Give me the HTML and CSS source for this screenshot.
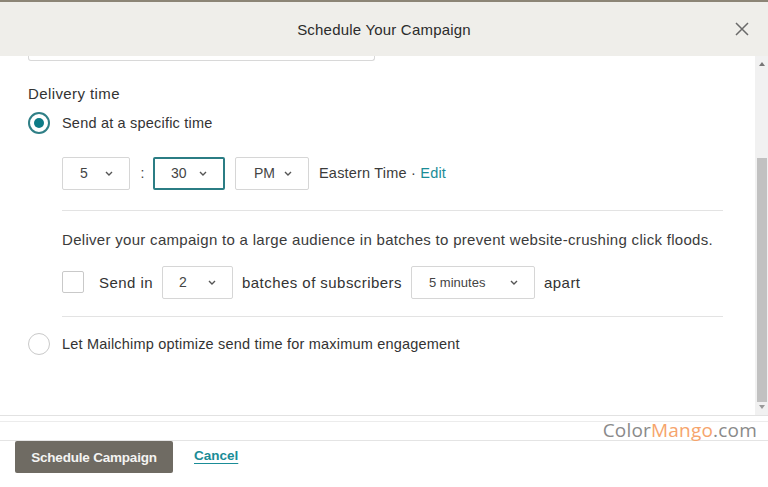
FILE: index.html
```html
<!DOCTYPE html>
<html>
<head>
<meta charset="utf-8">
<link rel="stylesheet" href="styles.css">
</head>
<body>
<div class="topline"></div>
<header class="header">
  <span></span>
  <h1 class="title">Schedule Your Campaign</h1>
  <button class="close" aria-label="Close">
    <svg width="16" height="16" viewBox="0 0 16 16"><path d="M2 2 L14 14 M14 2 L2 14" stroke="#6a6a6a" stroke-width="1.5" fill="none"/></svg>
  </button>
</header>
<div class="panel">
  <div class="content">
    <div class="stub"></div>
    <div class="label">Delivery time</div>
    <div class="option">
      <span class="radio checked"><span class="dot"></span></span>
      <span>Send at a specific time</span>
    </div>
    <div class="sub">
      <div class="row timerow">
        <div class="select w68"><span>5</span><svg class="chev" width="8" height="5" viewBox="0 0 8 5"><path d="M1 1 L4 4 L7 1" stroke="#555" stroke-width="1.4" fill="none"/></svg></div>
        <span class="colon">:</span>
        <div class="select w72 focus"><span>30</span><svg class="chev" width="8" height="5" viewBox="0 0 8 5"><path d="M1 1 L4 4 L7 1" stroke="#555" stroke-width="1.4" fill="none"/></svg></div>
        <div class="select w74 ml10"><span>PM</span><svg class="chev" width="8" height="5" viewBox="0 0 8 5"><path d="M1 1 L4 4 L7 1" stroke="#555" stroke-width="1.4" fill="none"/></svg></div>
        <span class="tz">Eastern Time · <a class="link">Edit</a></span>
      </div>
      <div class="divider"></div>
      <p class="desc">Deliver your campaign to a large audience in batches to prevent website-crushing click floods.</p>
      <div class="row batchrow">
        <span class="checkbox"></span>
        <span class="txt">Send in</span>
        <div class="select w71"><span>2</span><svg class="chev" width="8" height="5" viewBox="0 0 8 5"><path d="M1 1 L4 4 L7 1" stroke="#555" stroke-width="1.4" fill="none"/></svg></div>
        <span class="txt">batches of subscribers</span>
        <div class="select w124 small"><span>5 minutes</span><svg class="chev" width="8" height="5" viewBox="0 0 8 5"><path d="M1 1 L4 4 L7 1" stroke="#555" stroke-width="1.4" fill="none"/></svg></div>
        <span class="txt">apart</span>
      </div>
      <div class="divider d2"></div>
    </div>
    <div class="option opt2">
      <span class="radio"></span>
      <span>Let Mailchimp optimize send time for maximum engagement</span>
    </div>
  </div>
  <div class="scrollbar">
    <div class="arrow up"></div>
    <div class="track"><div class="thumb"></div></div>
    <div class="arrow down"></div>
  </div>
</div>
<div class="gap">
  <span class="mark">Color<span class="mango">Mango</span>.com</span>
</div>
<footer class="footer">
  <button class="primary">Schedule Campaign</button>
  <a class="cancel">Cancel</a>
</footer>
</body>
</html>
```

FILE: styles.css
```css
* { box-sizing: border-box; }
html, body { margin: 0; padding: 0; }
body {
  width: 768px;
  height: 487px;
  overflow: hidden;
  background: #fff;
  font-family: "Liberation Sans", Arial, sans-serif;
  color: #3b3b3b;
  font-size: 14px;
}
.topline { height: 2px; background: #8c8576; }
.header {
  height: 54px;
  background: #efeeea;
  display: grid;
  grid-template-columns: 1fr auto 1fr;
  align-items: center;
}
.title {
  margin: 0;
  font-size: 15px;
  font-weight: normal;
  color: #2b2b2b;
  letter-spacing: 0.2px;
}
.close {
  justify-self: end;
  margin-right: 18px;
  border: 0;
  background: none;
  padding: 0;
  width: 16px;
  height: 16px;
  display: flex;
}
.panel {
  display: flex;
  height: 360px;
  border-bottom: 1px solid #e2e2e2;
}
.content {
  flex: 1;
  padding-left: 28px;
  overflow: hidden;
}
.stub {
  width: 347px;
  height: 5px;
  border: 1px solid #d8d8d8;
  border-top: 0;
  border-radius: 0 0 3px 3px;
}
.label {
  margin-top: 24px;
  height: 17px;
  line-height: 17px;
  font-size: 15px;
  letter-spacing: 0.4px;
  color: #333;
}
.option {
  display: flex;
  align-items: center;
  gap: 12px;
  margin-top: 9px;
  height: 24px;
  font-size: 14.5px;
  letter-spacing: 0.2px;
  color: #333;
}
.radio {
  width: 22px;
  height: 22px;
  border-radius: 50%;
  border: 1px solid #c9c9c9;
  display: flex;
  align-items: center;
  justify-content: center;
  flex: none;
}
.radio.checked { border: 2px solid #2f7f86; }
.dot { width: 10px; height: 10px; border-radius: 50%; background: #0d7b86; }
.sub {
  padding-left: 34px;
  width: 695px;
}
.row { display: flex; align-items: center; }
.timerow { margin-top: 21px; height: 34px; }
.select {
  height: 33px;
  border: 1px solid #d6d6d6;
  border-radius: 2px;
  display: flex;
  align-items: center;
  justify-content: space-between;
  padding: 0 16px 0 16px;
  font-size: 14px;
  color: #444;
}
.select.focus { border: 2px solid #2b7d84; padding: 0 16px 0 16px; }
.chev { flex: none; }
.w68 { width: 68px; padding-left: 17px; }
.w72 { width: 72px; }
.w74 { width: 74px; padding-left: 18px; }
.w71 { width: 71px; }
.w124 { width: 124px; padding-left: 17px; }
.small { font-size: 13px; }
.ml10 { margin-left: 10px; }
.colon { width: 23px; text-align: center; padding-left: 2px; color: #444; }
.tz { margin-left: 10px; color: #3b3b3b; font-size: 14.5px; letter-spacing: 0.2px; }
.link { color: #1a8c97; }
.divider {
  height: 1px;
  background: #e3e3e3;
  margin-top: 20px;
  width: 661px;
}
.desc {
  margin: 20px 0 0;
  font-size: 15px;
  line-height: 17px;
  color: #3b3b3b;
  white-space: nowrap;
  letter-spacing: 0.3px;
}
.batchrow { margin-top: 17px; height: 34px; }
.checkbox {
  width: 22px;
  height: 22px;
  border: 1px solid #c9c9c9;
  border-radius: 2px;
  margin-right: 15px;
}
.txt { font-size: 15px; letter-spacing: 0.45px; color: #333; margin-right: 9px; }
.batchrow .select { margin-right: 9px; }
.d2 { margin-top: 17px; }
.opt2 { margin-top: 15px; }
.scrollbar {
  width: 13px;
  background: #f1f1f1;
  display: flex;
  flex-direction: column;
}
.arrow { height: 12px; position: relative; }
.arrow::after {
  content: "";
  position: absolute;
  left: 4px;
  border-left: 3px solid transparent;
  border-right: 3px solid transparent;
}
.arrow.up::after { top: 6px; border-bottom: 4px solid #777; }
.arrow.down::after { top: 2px; border-top: 4px solid #999; }
.track { flex: 1; display: flex; flex-direction: column; justify-content: flex-end; }
.thumb { height: 244px; background: #c1c1c1; margin: 0 1px 1px 2px; }
.gap {
  height: 19px;
  border-top: 1px solid #ececec;
  margin-top: 5px;
  display: flex;
  justify-content: flex-end;
  align-items: center;
  padding-right: 11px;
}
.mark {
  font-family: "Open Sans", "Liberation Sans", sans-serif;
  font-size: 19px;
  color: #8a8a8a;
  letter-spacing: 0.2px;
  transform: translateY(-1px);
}
.mango { color: #f6a46c; }
.footer {
  border-top: 1px solid #e4e4e4;
  display: flex;
  padding-left: 15px;
  height: 47px;
  align-items: flex-start;
}
.primary {
  width: 158px;
  height: 32px;
  background: #6f6b63;
  color: #f4f4f2;
  border: 0;
  border-radius: 2px;
  font-family: "Liberation Sans", Arial, sans-serif;
  font-size: 13.5px;
  font-weight: bold;
  letter-spacing: -0.2px;
}
.cancel {
  margin-left: 21px;
  margin-top: 7px;
  color: #1a8c97;
  font-size: 13.5px;
  font-weight: bold;
  text-decoration: underline;
  text-underline-offset: 3px;
}
```
